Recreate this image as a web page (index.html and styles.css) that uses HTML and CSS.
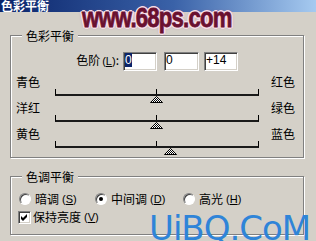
FILE: index.html
```html
<!DOCTYPE html>
<html lang="zh-CN">
<head>
<meta charset="utf-8">
<title>色彩平衡</title>
<link rel="stylesheet" href="styles.css">
</head>
<body>
<div class="window">
  <div class="titlebar"><span class="title">色彩平衡</span></div>
  <div class="content">
    <div class="group g1">
      <span class="legend">色彩平衡</span>
      <div class="levels">
        <span class="lvl-label">色阶<span class="mn">(<u>L</u>)</span>:</span>
        <span class="field f1"><span class="sel">0</span></span>
        <span class="field f2">0</span>
        <span class="field f3">+14</span>
      </div>
      <div class="sliders">
        <div class="srow">
          <span class="lab">青色</span>
          <div class="track">
            <svg class="thumb" style="--v:0" width="13" height="7" viewBox="0 0 13 7"><defs><pattern id="dith" width="2" height="2" patternUnits="userSpaceOnUse"><rect width="2" height="2" fill="#fff"/><rect width="1" height="1" fill="#000"/><rect x="1" y="1" width="1" height="1" fill="#000"/></pattern></defs><path d="M6.5 0.5 L12.5 6.5 L0.5 6.5 Z" fill="url(#dith)" stroke="#000" stroke-width="1"/></svg>
          </div>
          <span class="lab r">红色</span>
        </div>
        <div class="srow">
          <span class="lab">洋红</span>
          <div class="track">
            <svg class="thumb" style="--v:0" width="13" height="7" viewBox="0 0 13 7"><path d="M6.5 0.5 L12.5 6.5 L0.5 6.5 Z" fill="url(#dith)" stroke="#000" stroke-width="1"/></svg>
          </div>
          <span class="lab r">绿色</span>
        </div>
        <div class="srow">
          <span class="lab">黄色</span>
          <div class="track">
            <svg class="thumb" style="--v:14" width="13" height="7" viewBox="0 0 13 7"><path d="M6.5 0.5 L12.5 6.5 L0.5 6.5 Z" fill="url(#dith)" stroke="#000" stroke-width="1"/></svg>
          </div>
          <span class="lab r">蓝色</span>
        </div>
      </div>
    </div>
    <div class="group g2">
      <span class="legend">色调平衡</span>
      <div class="radios">
        <span class="opt o1"><span class="radio"></span>暗调<span class="mn">(<u>S</u>)</span></span>
        <span class="opt o2"><span class="radio on"></span>中间调<span class="mn">(<u>D</u>)</span></span>
        <span class="opt"><span class="radio"></span>高光<span class="mn">(<u>H</u>)</span></span>
      </div>
      <div class="check-row">
        <span class="check"><svg width="7" height="7" viewBox="0 0 7 7"><polygon points="0,2 2,4 6,0 6,3 2,7 0,5" fill="#000"/></svg></span>保持亮度<span class="mn">(<u>V</u>)</span>
      </div>
    </div>
  </div>
  <div class="wm1">www.68ps.com</div>
  <div class="wm2">UiBQ.CoM</div>
</div>
</body>
</html>
```

FILE: styles.css
```css
* { box-sizing: border-box; }
html, body { margin: 0; padding: 0; }
body {
  width: 316px;
  height: 241px;
  overflow: hidden;
  background: #d4d0c8;
  font: 12px/14px "Noto Sans CJK SC", "Noto Sans", sans-serif;
  color: #000;
}
.window {
  position: relative;
  width: 316px;
  height: 241px;
  overflow: hidden;
}
.titlebar {
  height: 12px;
  background: linear-gradient(to right, #0a246a 0%, #3a62a8 55%, #a6caf0 100%);
}
.title {
  display: block;
  padding-left: 1px;
  font-weight: 700;
  color: #fff;
  line-height: 12px;
}
.content {
  padding: 23px 0 0 10px;
}
.group {
  position: relative;
  width: 294px;
  border: 1px solid #808080;
  box-shadow: 1px 1px 0 #fff, inset 1px 1px 0 #fff;
}
.g1 { padding: 16px 0 4px 0; }
.g2 { margin-top: 18px; padding: 15px 0 10px 0; }
.legend {
  position: absolute;
  top: -7px;
  left: 11px;
  padding: 0 4px;
  background: #d4d0c8;
  line-height: 14px;
}
.mn {
  font: 11px/14px "Liberation Sans", Arial, sans-serif;
  margin-left: 3px;
}
.levels {
  display: flex;
  align-items: flex-start;
  height: 19px;
}
.lvl-label {
  width: 112px;
  text-align: right;
  padding-right: 4px;
  margin-top: 1px;
}
.lvl-label .mn { margin-left: 2px; }
.field {
  display: block;
  height: 19px;
  border: 1px solid;
  border-color: #808080 #fff #fff #808080;
  box-shadow: inset 1px 1px 0 #404040, inset -1px -1px 0 #d4d0c8;
  background: #fff;
  padding: 1px 1px 0;
  font: 12px/12px "Liberation Sans", Arial, sans-serif;
  white-space: nowrap;
}
.f1 { width: 34px; }
.f2 { width: 35px; margin-left: 7px; }
.f3 { width: 34px; margin-left: 5px; }
.sel { background: #0a246a; color: #fff; }
.sliders { margin-top: 4px; }
.srow {
  display: flex;
  align-items: flex-start;
  height: 26px;
  padding-left: 5px;
}
.lab { width: 39px; flex: none; }
.lab.r { width: auto; margin-left: 12px; }
.track {
  position: relative;
  flex: none;
  width: 204px;
  height: 7px;
  margin-top: 14px;
  border-left: 1px solid #000;
  border-right: 1px solid #000;
  border-bottom: 2px solid #1a1a1a;
}
.track::after {
  content: "";
  position: absolute;
  left: calc(50% - 1px);
  top: 0;
  width: 1px;
  height: 5px;
  background: #000;
}
.thumb {
  position: absolute;
  top: 7px;
  left: calc(50% - 7px + var(--v) * 1px);
  display: block;
}
.radios {
  display: flex;
  align-items: center;
  height: 14px;
  padding-left: 8px;
}
.opt { display: flex; align-items: center; flex: none; }
.o1 { width: 76px; }
.o2 { width: 88px; }
.radio {
  position: relative;
  flex: none;
  width: 12px;
  height: 12px;
  margin-right: 4px;
  border-radius: 50%;
  background: #fff;
  border: 1px solid;
  border-color: #808080 #fff #fff #808080;
  box-shadow: inset 1px 1px 0 #404040;
}
.radio.on::after {
  content: "";
  position: absolute;
  left: 3px;
  top: 3px;
  width: 4px;
  height: 4px;
  border-radius: 50%;
  background: #000;
}
.check-row {
  display: flex;
  align-items: center;
  height: 14px;
  margin-top: 4px;
  padding-left: 7px;
}
.check {
  flex: none;
  display: flex;
  align-items: center;
  justify-content: center;
  width: 13px;
  height: 13px;
  margin-right: 2px;
  border: 1px solid;
  border-color: #808080 #fff #fff #808080;
  box-shadow: inset 1px 1px 0 #404040, inset -1px -1px 0 #d4d0c8;
  background: #fff;
}
.check svg { display: block; }
.wm1 {
  position: absolute;
  left: 82px;
  top: 4px;
  font: 700 28px/28px "Liberation Sans", Arial, sans-serif;
  letter-spacing: -1px;
  color: #6a1030;
  -webkit-text-stroke: 0.8px #6a1030;
  white-space: nowrap;
  transform: scaleX(0.79);
  transform-origin: 0 0;
  text-shadow:
    -2px 0 #f6dde8, 2px 0 #f6dde8, 0 -2px #f6dde8, 0 2px #f6dde8,
    -1px -1px #f6dde8, 1px 1px #f6dde8, -1px 1px #f6dde8, 1px -1px #f6dde8,
    -2px -1px #f6dde8, 2px 1px #f6dde8, -2px 1px #f6dde8, 2px -1px #f6dde8,
    0 0 4px #b06080;
}
.wm2 {
  position: absolute;
  left: 149px;
  top: 211px;
  font: 34px/34px "DejaVu Sans", sans-serif;
  letter-spacing: -1px;
  color: #2f84d8;
  white-space: nowrap;
}
```
